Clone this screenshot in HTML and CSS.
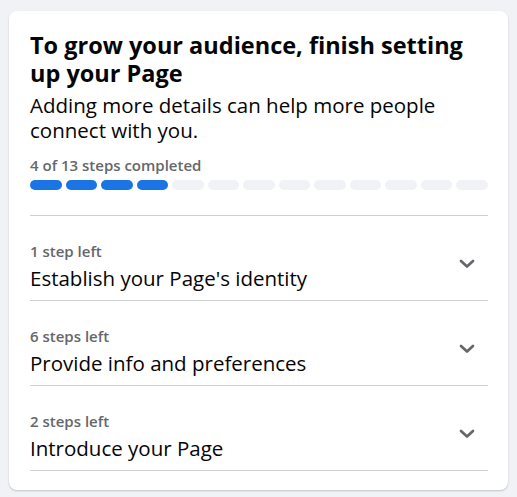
FILE: index.html
```html
<!DOCTYPE html>
<html lang="en">
<head>
<meta charset="utf-8">
<link rel="stylesheet" href="styles.css">
</head>
<body>
<div class="card">
  <h1 class="title">To grow your audience, finish setting up your Page</h1>
  <p class="subtitle">Adding more details can help more people connect with you.</p>
  <div class="progress-label">4 of 13 steps completed</div>
  <div class="progress">
    <span class="seg done"></span><span class="seg done"></span><span class="seg done"></span><span class="seg done"></span>
    <span class="seg"></span><span class="seg"></span><span class="seg"></span><span class="seg"></span><span class="seg"></span>
    <span class="seg"></span><span class="seg"></span><span class="seg"></span><span class="seg"></span>
  </div>
  <div class="steps">
    <div class="step">
      <div class="step-text">
        <div class="step-count">1 step left</div>
        <div class="step-name">Establish your Page's identity</div>
      </div>
      <svg class="chev" width="16" height="10" viewBox="0 0 16 10"><path d="M2 2 L8 7.6 L14 2" fill="none" stroke="#65676b" stroke-width="2.7" stroke-linecap="round" stroke-linejoin="round"/></svg>
    </div>
    <div class="step">
      <div class="step-text">
        <div class="step-count">6 steps left</div>
        <div class="step-name">Provide info and preferences</div>
      </div>
      <svg class="chev" width="16" height="10" viewBox="0 0 16 10"><path d="M2 2 L8 7.6 L14 2" fill="none" stroke="#65676b" stroke-width="2.7" stroke-linecap="round" stroke-linejoin="round"/></svg>
    </div>
    <div class="step">
      <div class="step-text">
        <div class="step-count">2 steps left</div>
        <div class="step-name">Introduce your Page</div>
      </div>
      <svg class="chev" width="16" height="10" viewBox="0 0 16 10"><path d="M2 2 L8 7.6 L14 2" fill="none" stroke="#65676b" stroke-width="2.7" stroke-linecap="round" stroke-linejoin="round"/></svg>
    </div>
  </div>
</div>
</body>
</html>
```
FILE: styles.css
```css
html, body {
  margin: 0;
  background: #f0f2f5;
}
body {
  padding: 11px 9px;
  font-family: "Open Sans", "Noto Sans", sans-serif;
  color: #050505;
}
.card {
  background: #fff;
  border-radius: 8px;
  box-shadow: 0 1px 2px rgba(0, 0, 0, 0.2);
  padding: 20px 20px 19px 21px;
  width: 499px;
  box-sizing: border-box;
}
.title {
  margin: 0;
  font-size: 23.5px;
  line-height: 28px;
  font-weight: 700;
}
.subtitle {
  margin: 6px 0 0;
  font-size: 20.5px;
  line-height: 25px;
  font-weight: 400;
}
.progress-label {
  margin-top: 12px;
  font-size: 15px;
  line-height: 20px;
  font-weight: 600;
  color: #65676b;
}
.progress {
  display: flex;
  gap: 4px;
  margin-top: 5px;
  height: 10px;
}
.seg {
  flex: 1;
  border-radius: 5px;
  background: #f0f2f5;
}
.seg.done {
  background: #1b74e4;
}
.steps {
  margin-top: 25px;
  border-top: 1px solid #ced0d4;
}
.step {
  padding: 25px 0 9px;
  border-bottom: 1px solid #ced0d4;
  display: flex;
  align-items: center;
  justify-content: space-between;
}
.step-count {
  font-size: 15px;
  line-height: 20px;
  font-weight: 600;
  color: #65676b;
}
.step-name {
  margin-top: 4px;
  font-size: 20.5px;
  line-height: 26px;
  color: #050505;
}
.chev {
  margin-right: 13px;
  margin-bottom: 4px;
}
```
